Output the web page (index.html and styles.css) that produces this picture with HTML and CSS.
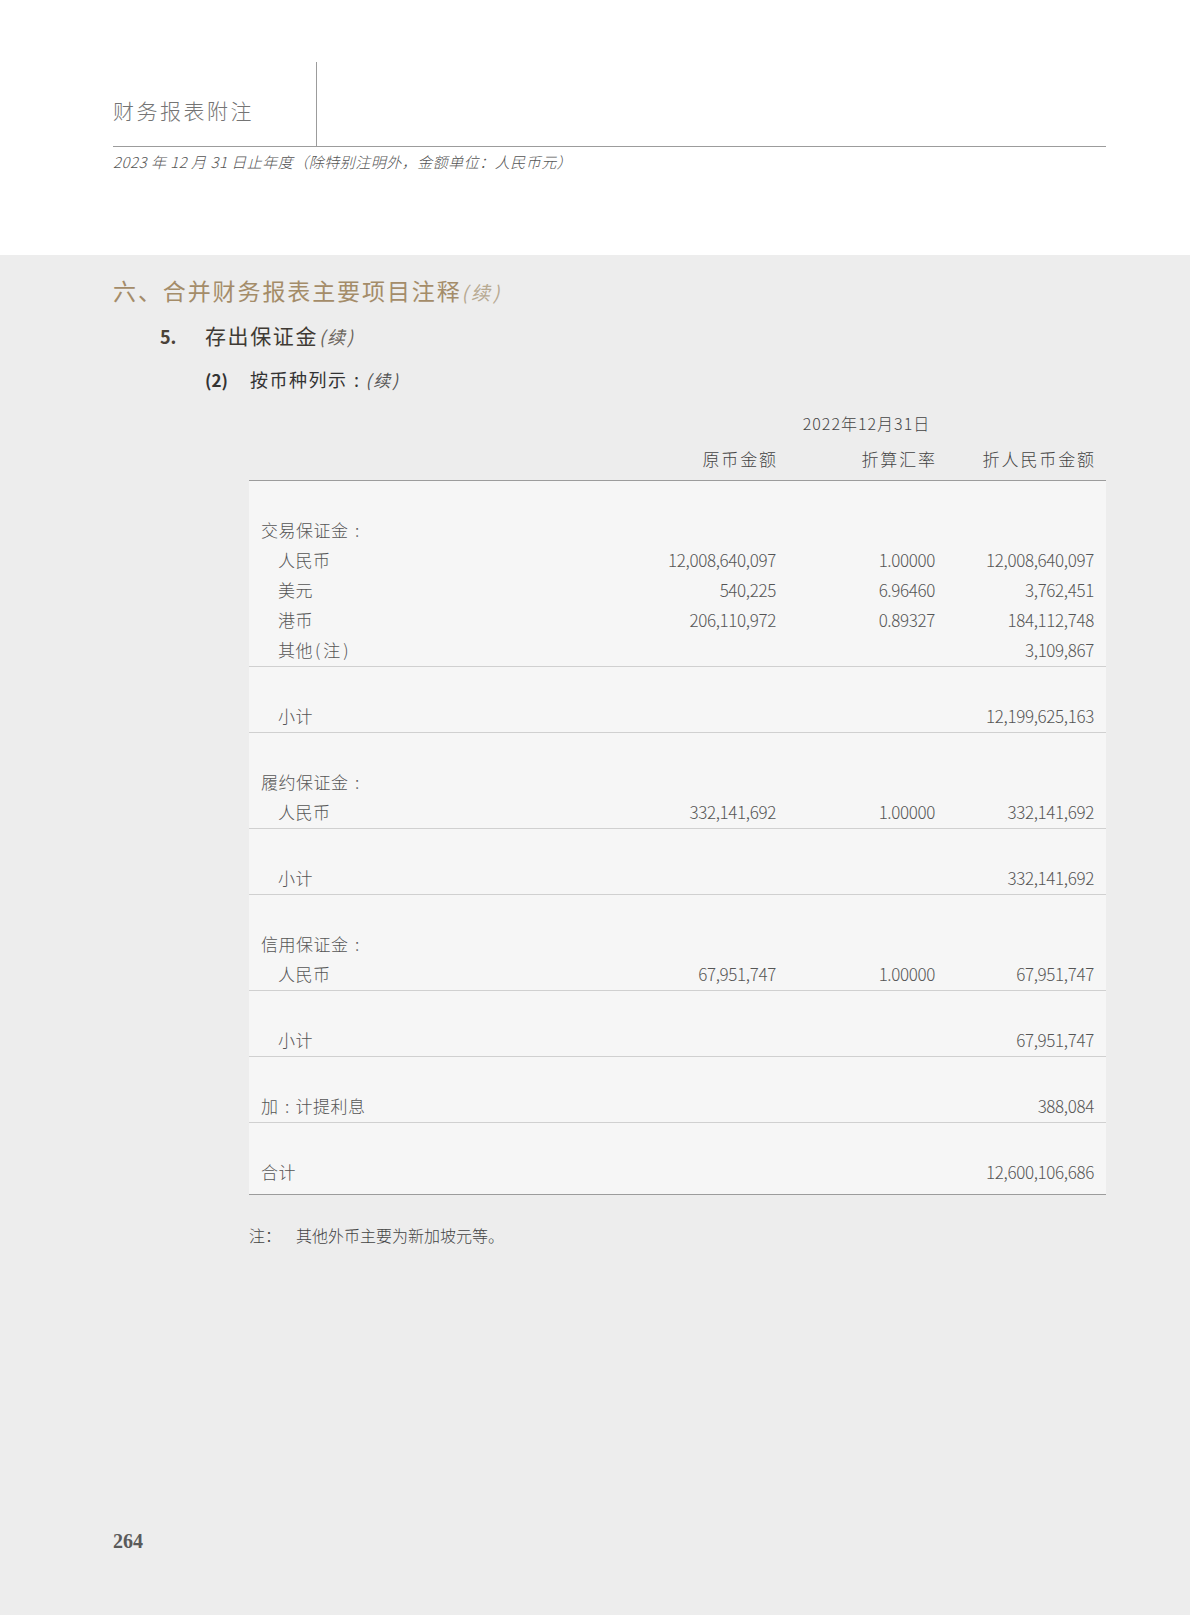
FILE: index.html
```html
<!DOCTYPE html>
<html lang="zh-CN">
<head>
<meta charset="utf-8">
<title>财务报表附注</title>
<link rel="stylesheet" href="styles.css">
</head>
<body>
<div class="page">
  <header class="top">
    <div class="top-inner">
      <div class="title-row">
        <div class="title-cell"><span class="title">财务报表附注</span></div>
      </div>
      <p class="subtitle">2023 年 12 月 31 日止年度（除特别注明外，金额单位：人民币元）</p>
    </div>
  </header>
  <main class="main">
    <h2 class="h-section">六、合并财务报表主要项目注释<span class="cont">(续)</span></h2>
    <h3 class="h-item"><span class="num">5.</span><span class="h-text">存出保证金</span><span class="cont">(续)</span></h3>
    <h4 class="h-sub"><span class="num">(2)</span><span class="h-text">按币种列示<span class="colon">:</span></span><span class="cont">(续)</span></h4>

    <div class="table">
      <div class="thead">
        <div class="row date-row"><div></div><div class="date">2022年12月31日</div></div>
        <div class="row col-row">
          <div></div>
          <div class="num-cell hd">原币金额</div>
          <div class="num-cell hd">折算汇率</div>
          <div class="num-cell hd">折人民币金额</div>
        </div>
      </div>

      <div class="group">
        <div class="row"><div class="lbl">交易保证金<span class="colon">:</span></div><div></div><div></div><div></div></div>
        <div class="row"><div class="lbl ind">人民币</div><div class="num-cell">12,008,640,097</div><div class="num-cell">1.00000</div><div class="num-cell">12,008,640,097</div></div>
        <div class="row"><div class="lbl ind">美元</div><div class="num-cell">540,225</div><div class="num-cell">6.96460</div><div class="num-cell">3,762,451</div></div>
        <div class="row"><div class="lbl ind">港币</div><div class="num-cell">206,110,972</div><div class="num-cell">0.89327</div><div class="num-cell">184,112,748</div></div>
        <div class="row"><div class="lbl ind">其他<span class="paren">(注)</span></div><div></div><div></div><div class="num-cell">3,109,867</div></div>
      </div>
      <div class="group">
        <div class="row"><div class="lbl ind">小计</div><div></div><div></div><div class="num-cell">12,199,625,163</div></div>
      </div>

      <div class="group">
        <div class="row"><div class="lbl">履约保证金<span class="colon">:</span></div><div></div><div></div><div></div></div>
        <div class="row"><div class="lbl ind">人民币</div><div class="num-cell">332,141,692</div><div class="num-cell">1.00000</div><div class="num-cell">332,141,692</div></div>
      </div>
      <div class="group">
        <div class="row"><div class="lbl ind">小计</div><div></div><div></div><div class="num-cell">332,141,692</div></div>
      </div>

      <div class="group">
        <div class="row"><div class="lbl">信用保证金<span class="colon">:</span></div><div></div><div></div><div></div></div>
        <div class="row"><div class="lbl ind">人民币</div><div class="num-cell">67,951,747</div><div class="num-cell">1.00000</div><div class="num-cell">67,951,747</div></div>
      </div>
      <div class="group">
        <div class="row"><div class="lbl ind">小计</div><div></div><div></div><div class="num-cell">67,951,747</div></div>
      </div>

      <div class="group">
        <div class="row"><div class="lbl">加<span class="colon">:</span>计提利息</div><div></div><div></div><div class="num-cell">388,084</div></div>
      </div>
      <div class="group last">
        <div class="row"><div class="lbl">合计</div><div></div><div></div><div class="num-cell">12,600,106,686</div></div>
      </div>
    </div>

    <p class="note"><span class="note-key">注：</span><span>其他外币主要为新加坡元等。</span></p>

    <footer class="folio">264</footer>
  </main>
</div>
</body>
</html>
```

FILE: styles.css
```css
* { box-sizing: border-box; }

html, body {
  margin: 0;
  padding: 0;
}

body {
  width: 1190px;
  background: #ededed;
  font-family: "Noto Sans CJK SC", "Noto Sans", sans-serif;
  color: #4d4d4d;
}

.page {
  display: flex;
  flex-direction: column;
  min-height: 1615px;
}

/* ---------- top white header ---------- */
.top {
  background: #ffffff;
  height: 255px;
  padding-top: 62px;
}

.top-inner {
  margin-left: 113px;
  width: 993px;
}

.title-row {
  height: 85px;
  border-bottom: 1px solid #9c9c9c;
  display: flex;
}

.title-cell {
  width: 204px;
  border-right: 1px solid #9c9c9c;
  padding-top: 34px;
}

.title {
  display: block;
  font-size: 21px;
  line-height: 28px;
  letter-spacing: 2.5px;
  font-weight: 300;
  color: #747474;
}

.subtitle {
  margin: 5px 0 0 0;
  font-size: 15px;
  line-height: 20px;
  font-style: italic;
  font-weight: 300;
  letter-spacing: 0.5px;
  color: #555555;
}

/* ---------- main grey area ---------- */
.main {
  flex: 1;
  display: flex;
  flex-direction: column;
  padding-left: 113px;
  padding-bottom: 62px;
}

.h-section {
  margin: 20px 0 0 0;
  font-size: 23px;
  line-height: 30px;
  font-weight: 400;
  letter-spacing: 1.9px;
  color: #a48c69;
}

.h-section .cont {
  font-size: 19px;
  font-style: italic;
  letter-spacing: 3px;
  color: #b7a991;
}

.h-item {
  margin: 14px 0 0 47px;
  display: flex;
  align-items: baseline;
  font-size: 21px;
  line-height: 28px;
  font-weight: 400;
  letter-spacing: 1.6px;
  color: #3f3a34;
}

.h-item .num {
  width: 45px;
  font-size: 18px;
  font-weight: 700;
  letter-spacing: 0;
  color: #4a4238;
}

.h-item .cont {
  font-size: 18px;
  font-style: italic;
  letter-spacing: 2px;
  color: #6a645c;
  margin-left: 1px;
}

.h-sub {
  margin: 16px 0 0 92px;
  display: flex;
  align-items: baseline;
  font-size: 18px;
  line-height: 26px;
  font-weight: 400;
  letter-spacing: 1.5px;
  color: #333333;
}

.h-sub .num {
  width: 45px;
  font-size: 17px;
  font-weight: 700;
  letter-spacing: 0;
  color: #333333;
}

.h-sub .cont {
  font-size: 17px;
  font-style: italic;
  letter-spacing: 2px;
  color: #555555;
}

.colon {
  display: inline-block;
  width: 1em;
  text-align: center;
  letter-spacing: 0;
}

/* ---------- table ---------- */
.table {
  margin: 18px 0 0 136px;
  width: 857px;
}

.row {
  display: grid;
  grid-template-columns: 1fr 159px 159px 159px;
  padding: 0 12px 3px 12px;
  height: 30px;
  align-items: center;
  font-size: 17px;
  font-weight: 300;
  color: #555555;
}

.thead {
  border-bottom: 1px solid #9c9c9c;
  padding-bottom: 9px;
}

.thead .row {
  padding-bottom: 0;
}

.date-row {
  height: 24px;
  grid-template-columns: 1fr 477px;
}

.date {
  text-align: center;
  padding-left: 22px;
  font-size: 16px;
  letter-spacing: 1px;
  color: #444444;
}

.col-row {
  height: 24px;
  margin-top: 12px;
  position: relative;
  top: -1px;
}

.num-cell.hd {
  letter-spacing: 1.9px;
  color: #444444;
  margin-right: -2px;
}

.num-cell {
  text-align: right;
  letter-spacing: -0.35px;
  white-space: nowrap;
}

.lbl {
  letter-spacing: 0.5px;
  white-space: nowrap;
}

.lbl.ind {
  padding-left: 17px;
}

.paren {
  letter-spacing: 3px;
  margin-left: 2px;
}

.group {
  background: #f6f6f6;
  padding-top: 35px;
  border-bottom: 1px solid #d0d0d0;
}

.group.last {
  padding-bottom: 6px;
  border-bottom: 1px solid #9c9c9c;
}

/* ---------- note & folio ---------- */
.note {
  margin: 29px 0 0 136px;
  font-size: 16px;
  line-height: 24px;
  font-weight: 300;
  color: #444444;
  display: flex;
  position: relative;
  top: -1px;
}

.note-key {
  width: 47px;
}

.folio {
  margin-top: auto;
  font-family: "Liberation Serif", "DejaVu Serif", serif;
  font-size: 20px;
  line-height: 24px;
  font-weight: 700;
  color: #5a5a5a;
}
```
